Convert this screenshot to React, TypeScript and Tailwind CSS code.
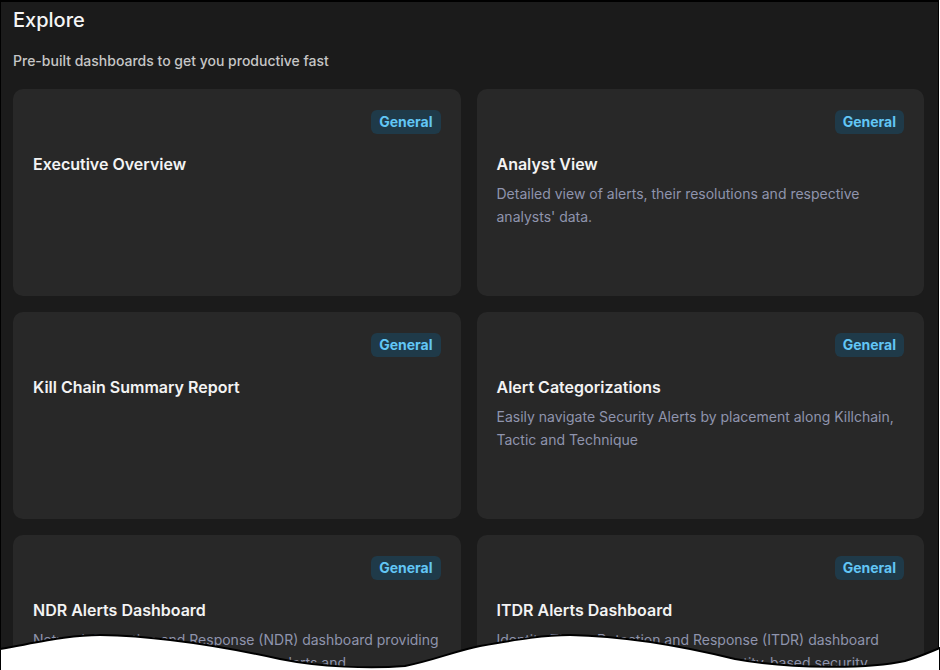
import React from 'react';

interface Dashboard {
  id: string;
  title: string;
  description?: string;
  category: string;
}

const dashboards: Dashboard[] = [
  { id: 'exec', title: 'Executive Overview', category: 'General' },
  {
    id: 'analyst',
    title: 'Analyst View',
    description: "Detailed view of alerts, their resolutions and respective analysts' data.",
    category: 'General',
  },
  { id: 'killchain', title: 'Kill Chain Summary Report', category: 'General' },
  {
    id: 'categorizations',
    title: 'Alert Categorizations',
    description: 'Easily navigate Security Alerts by placement along Killchain, Tactic and Technique',
    category: 'General',
  },
  {
    id: 'ndr',
    title: 'NDR Alerts Dashboard',
    description:
      'Network Detection and Response (NDR) dashboard providing visibility into network-based security alerts and investigations.',
    category: 'General',
  },
  {
    id: 'itdr',
    title: 'ITDR Alerts Dashboard',
    description:
      'Identity Threat Detection and Response (ITDR) dashboard providing a consolidated view of identity-based security alerts.',
    category: 'General',
  },
];

// torn paper edge laid over the bottom of the screenshot
const TornEdge: React.FC = () => (
  <svg
    className="absolute left-0 bottom-0 w-[940px] h-[40px] pointer-events-none"
    viewBox="0 630 940 40"
    preserveAspectRatio="none"
  >
    <path
      d="M0,649 C40,642 70,635 100,635 C160,636 230,648 280,659 C320,667 370,669 405,666 C435,660 455,651 480,646 C520,639 545,635 570,635 C630,636 690,648 735,659 C790,669 870,669 905,661 C922,656 932,651 940,648 L940,672 L0,672 Z"
      fill="#ffffff"
      stroke="#000000"
      strokeWidth="2"
    />
  </svg>
);

const DashboardCard: React.FC<{ item: Dashboard }> = ({ item }) => (
  <div className="h-[207px] bg-[#282828] rounded-[10px] px-5 pt-[21px] pb-5 flex flex-col overflow-hidden">
    <div className="flex justify-end">
      <span className="h-6 px-2 rounded-md bg-[#1f3a49] text-[#62c6f5] text-sm font-bold leading-6">
        {item.category}
      </span>
    </div>
    <h3 className="mt-[18px] text-base font-semibold text-[#f3f3f3] leading-6">{item.title}</h3>
    {item.description && (
      <p className="mt-[6px] text-sm text-[#8f94ad] leading-[23px]">{item.description}</p>
    )}
  </div>
);

export default function App() {
  return (
    <div
      className="relative w-[940px] h-[670px] overflow-hidden bg-white"
      style={{ fontFamily: 'Inter, "Noto Sans", sans-serif' }}
    >
      <div className="h-full mr-[1px] bg-[#1b1b1b] border-t-2 border-l border-r border-black pl-3 pr-[14px] pt-1">
        <h1 className="text-xl font-medium text-[#f5f5f5] leading-7">Explore</h1>
        <p className="mt-[17px] text-sm font-medium text-[#c6c6c6] leading-5">
          Pre-built dashboards to get you productive fast
        </p>
        <div className="mt-[18px] grid grid-cols-2 gap-4">
          {dashboards.map((d) => (
            <DashboardCard key={d.id} item={d} />
          ))}
        </div>
      </div>
      <TornEdge />
    </div>
  );
}
